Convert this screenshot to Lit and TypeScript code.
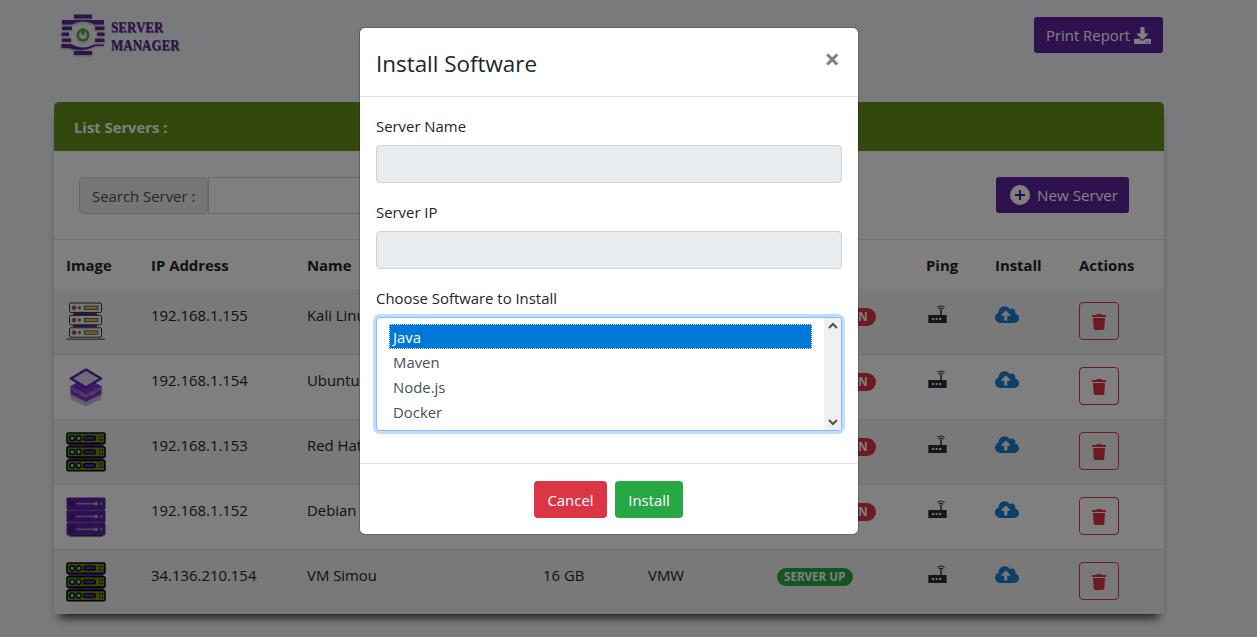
import { LitElement, html, css, svg } from "lit";
import { customElement } from "lit/decorators.js";

const cloud = html`<svg class="cloud" viewBox="0 0 640 512"><path fill="currentColor" d="M537.6 226.6c4.1-10.7 6.4-22.4 6.4-34.6 0-53-43-96-96-96-19.7 0-38.1 6-53.3 16.2C367 64.2 315.3 32 256 32c-88.4 0-160 71.6-160 160 0 2.7.1 5.4.2 8.1C40.2 219.8 0 273.2 0 336c0 79.5 64.5 144 144 144h368c70.7 0 128-57.3 128-128 0-61.9-44-113.6-102.4-125.4zM393.4 288H328v112c0 8.8-7.2 16-16 16h-48c-8.8 0-16-7.2-16-16V288h-65.4c-14.3 0-21.4-17.2-11.3-27.3l105.4-105.4c6.2-6.2 16.4-6.2 22.6 0l105.4 105.4c10.1 10.1 2.9 27.3-11.3 27.3z"/></svg>`;
const trash = html`<svg class="trash" viewBox="0 0 448 512"><path fill="currentColor" d="M432 32H312l-9.4-18.7A24 24 0 0 0 281.1 0H166.8a23.72 23.72 0 0 0-21.4 13.3L136 32H16A16 16 0 0 0 0 48v32a16 16 0 0 0 16 16h416a16 16 0 0 0 16-16V48a16 16 0 0 0-16-16zM53.2 467a48 48 0 0 0 47.9 45h245.8a48 48 0 0 0 47.9-45L416 128H32z"/></svg>`;
const download = html`<svg class="dl" viewBox="0 0 512 512"><path fill="currentColor" d="M216 0h80c13.3 0 24 10.7 24 24v168h87.7c17.8 0 26.7 21.5 14.1 34.1L269.7 378.3c-7.5 7.5-19.8 7.5-27.3 0L90.1 226.1c-12.6-12.6-3.7-34.1 14.1-34.1H192V24c0-13.3 10.7-24 24-24zm296 376v112c0 13.3-10.7 24-24 24H24c-13.3 0-24-10.7-24-24V376c0-13.3 10.7-24 24-24h146.7l49 49c20.1 20.1 52.5 20.1 72.6 0l49-49H488c13.3 0 24 10.7 24 24zm-124 88c0-11-9-20-20-20s-20 9-20 20 9 20 20 20 20-9 20-20zm64 0c0-11-9-20-20-20s-20 9-20 20 9 20 20 20 20-9 20-20z"/></svg>`;
const plus = html`<svg class="plus" viewBox="0 0 20 20"><circle cx="10" cy="10" r="10" fill="currentColor"/><path d="M10 5v10M5 10h10" stroke="#4f1d96" stroke-width="2"/></svg>`;
const router = html`<svg class="router" viewBox="0 0 19 18">
  <path d="M9.4 2.4C11.4.6 14.6.6 16.6 2.4" fill="none" stroke="#22303f" stroke-width="1.2"/>
  <path d="M10.8 4.2C12 3.2 14 3.2 15.2 4.2" fill="none" stroke="#22303f" stroke-width="1.2"/>
  <rect x="12.3" y="5" width="1.5" height="6" fill="#22303f"/>
  <rect x="0" y="10" width="19" height="8" rx="1" fill="#22303f"/>
  <rect x="18" y="10.4" width="1" height="7.2" fill="#2a78bd"/>
  <rect x="0" y="10.4" width="1" height="7.2" fill="#9a6a3a"/>
  <path d="M4 14h2M7.6 14h2M11.2 14h2" stroke="#e9edf2" stroke-width="1.8"/>
</svg>`;

function rackGreen() {
  const u = (y: number) => svg`
    <rect x="1" y="${y}" width="38" height="10.4" rx="1.2" fill="#65901a" stroke="#0c0c0c" stroke-width="1.6"/>
    <circle cx="6.2" cy="${y + 5.2}" r="2.5" fill="#7dc9a0" stroke="#0c0c0c" stroke-width="1.4"/>
    <circle cx="12.8" cy="${y + 5.2}" r="2.5" fill="#7dc9a0" stroke="#0c0c0c" stroke-width="1.4"/>
    <rect x="17.5" y="${y + 3.2}" width="12" height="4" rx="2" fill="#5f22ad" stroke="#0c0c0c" stroke-width="1.2"/>
    <path d="M33 ${y + 3.6}h1.6M36 ${y + 3.6}h1.2M33 ${y + 6.8}h1.6M36 ${y + 6.8}h1.2" stroke="#0c0c0c" stroke-width="1.4"/>`;
  return html`<svg class="ico" viewBox="0 0 40 40">
    <rect x="2.5" y="11" width="35" height="3" fill="#5f22ad"/><rect x="2.5" y="25" width="35" height="3" fill="#5f22ad"/>
    ${u(1)}${u(14.7)}${u(28.4)}</svg>`;
}
function rackPurple() {
  const u = (y: number) => svg`
    <rect x="0.5" y="${y}" width="39" height="12.4" rx="1.4" fill="#5a22a0"/>
    <rect x="3.5" y="${y + 3.7}" width="5" height="5" fill="#46187f"/>
    <rect x="10" y="${y + 5.4}" width="21" height="1.6" fill="#a78cc9"/>
    <circle cx="30" cy="${y + 6.2}" r="2" fill="#4fd0a0"/>
    <rect x="34.2" y="${y + 5.2}" width="2" height="2" fill="#4fd0a0"/>`;
  return html`<svg class="ico" viewBox="0 0 40 40">
    <rect x="3.5" y="37.4" width="33" height="2.2" fill="#16321e"/>
    ${u(0.5)}${u(13.3)}${u(26.1)}</svg>`;
}
function rackGray() {
  const u = (y: number) => svg`
    <rect x="3.5" y="${y}" width="32" height="9.4" rx="1.2" fill="#eef0f2" stroke="#33373c" stroke-width="1"/>
    <circle cx="8" cy="${y + 4.7}" r="1.9" fill="#e2433f" stroke="#33373c" stroke-width=".6"/>
    <circle cx="13.4" cy="${y + 4.7}" r="1.3" fill="#3fa06a" stroke="#33373c" stroke-width=".5"/>
    <rect x="18.4" y="${y + 3}" width="13.5" height="3.4" fill="#f0b92d" stroke="#33373c" stroke-width=".7"/>`;
  return html`<svg class="ico" viewBox="0 0 40 40">
    <rect x="7" y="10" width="24" height="3" fill="#5f22ad"/><rect x="7" y="22.5" width="24" height="3" fill="#5f22ad"/>
    ${u(1)}${u(13.4)}${u(25.8)}
    <path d="M0.5 37.2H39" stroke="#33373c" stroke-width="1"/></svg>`;
}
function stack() {
  return html`<svg class="ico" viewBox="0 0 40 40">
    <path d="M20 24L36 32L20 39.5L4 32Z" fill="#c9c1e0"/>
    <path d="M4.5 19L20 11L35.5 19V28L20 35L4.5 28Z" fill="#7a35c8"/>
    <path d="M4.5 19L20 27L35.5 19V23L20 31L4.5 23Z" fill="#9a62dc"/>
    <path d="M4.5 27L20 35L35.5 27V30L20 38L4.5 30Z" fill="#c3b5dd"/>
    <path d="M20 2.5L35 11.5L20 20.5L5 11.5Z" fill="#dcd6ee" stroke="#5f22ad" stroke-width="2.6" stroke-linejoin="round"/>
    <path d="M14 27l6 3M24 28l5-2" stroke="#f0b92d" stroke-width="1"/>
  </svg>`;
}

const logoIcon = html`<svg class="logo-ico" viewBox="0 0 44 42">
  <g fill="#5a2a95">
    <rect x="13" y="0.5" width="18" height="4"/>
    <path d="M1 6h42v4.5H33C27 6.5 17 6.5 11 10.5H1z"/>
    <rect x="1" y="12.5" width="10" height="3.4"/><rect x="34" y="12.5" width="9.5" height="3.4"/>
    <rect x="0.5" y="18.5" width="7.5" height="3.4"/><rect x="36" y="18.5" width="7.5" height="3.4"/>
    <rect x="1" y="24.5" width="9" height="3.4"/><rect x="34" y="24.5" width="9.5" height="3.4"/>
    <path d="M0.5 30h10C17 34.5 26 34.5 33 30.5h10v1.4H34C27 36.5 16 37 8 34H.5z"/>
    <rect x="13" y="37" width="18" height="4"/>
  </g>
  <circle cx="22" cy="21" r="5.2" fill="none" stroke="#4fae2e" stroke-width="2.2"/>
  <path d="M22 14v6.6" stroke="#4fae2e" stroke-width="2.2"/>
</svg>`;

const rows = [
  { img: rackGray, ip: "192.168.1.155", name: "Kali Linux", ram: "", os: "", up: false },
  { img: stack, ip: "192.168.1.154", name: "Ubuntu", ram: "", os: "", up: false },
  { img: rackGreen, ip: "192.168.1.153", name: "Red Hat", ram: "", os: "", up: false },
  { img: rackPurple, ip: "192.168.1.152", name: "Debian", ram: "", os: "", up: false },
  { img: rackGreen, ip: "34.136.210.154", name: "VM Simou", ram: "16 GB", os: "VMW", up: true },
];

@customElement("app-root")
export class AppRoot extends LitElement {
  static styles = css`
    :host {
      display: block;
      width: 1257px;
      height: 637px;
      overflow: hidden;
      position: relative;
      background: #f3f5f8;
      font-family: "Open Sans", "Noto Sans", sans-serif;
      font-size: 14.9px;
      line-height: 24px;
      color: #212529;
    }
    * { box-sizing: border-box; }
    svg { display: block; }
    .page { width: 1218px; padding: 14px 54px 0; }
    .top { display: flex; justify-content: space-between; align-items: flex-start; height: 88px; padding-left: 7px; }
    .logo { display: flex; gap: 6px; align-items: flex-start; }
    .logo-ico { width: 44px; height: 42px; filter: drop-shadow(0 1px 1px rgba(0,0,0,.3)); }
    .logo-text {
      font-family: "Liberation Serif", serif; font-weight: 700; font-size: 14.6px; line-height: 17.5px;
      color: #5a2a95; padding-top: 5px; letter-spacing: .1px; text-shadow: .5px .5px 1px rgba(60,30,110,.8);
      transform: scaleX(.885); transform-origin: left top;
    }
    .btn-p {
      display: flex; align-items: center; background: #5f229f; color: #fff; border-radius: 3px;
      height: 36px;
    }
    .print { margin: 3px 1px 0 0; width: 129px; padding-left: 12px; gap: 4px; }
    .dl { width: 17px; height: 17px; }
    .card { background: #fff; border-radius: 5px 5px 0 0; box-shadow: 0 9px 9px -5px rgba(0,0,0,.75); }
    .card-head {
      height: 49px; background: #65901a; color: #fff; font-weight: 700; border-radius: 5px 5px 0 0;
      padding: 12.5px 20px 0; font-size: 14.8px;
    }
    .tools { height: 89px; display: flex; justify-content: space-between; padding: 26px 35px 0 25px; border-bottom: 1px solid #dee2e6; }
    .search { display: flex; height: 38px; }
    .search-label {
      width: 129px; height: 37px; background: #e9ecef; border: 1px solid #ced4da; border-radius: 4px;
      padding: 6px 12px 0; color: #495057; white-space: nowrap;
    }
    .search-input { width: 280px; height: 37px; border: 1px solid #ced4da; background: #fff; }
    .new { width: 133px; padding-left: 14px; gap: 7px; font-size: 15.2px; }
    .plus { width: 20px; height: 20px; }
    table { width: 1110px; border-collapse: collapse; table-layout: fixed; }
    th { text-align: left; padding: 13px 12px 0; font-weight: 700; height: 49px; vertical-align: top; }
    td { padding: 13px 12px 0; height: 65px; vertical-align: top; }
    tbody tr { border-top: 1px solid #dee2e6; }
    tbody tr:first-child { border-top: 0; }
    tbody tr:first-child td { padding-top: 14px; }
    tbody tr:first-child .badge { margin-top: 2px; }
    tbody tr:nth-child(odd) { background: #f2f2f2; }
    .ico { width: 40px; height: 40px; margin-top: -1px; }
    .badge {
      display: inline-block; border-radius: 10px; height: 18px; line-height: 18px; padding: 0 8px 0 7px; color: #fff;
      font-weight: 700; font-size: 11.6px; white-space: nowrap; margin-top: 3px;
    }
    .up { background: #28a745; }
    .down { background: #dc3545; width: 99px; }
    .router { width: 19px; height: 18px; margin-left: 2px; margin-top: 2px; }
    .cloud { width: 24px; height: 19.2px; color: #1a7fd0; margin-top: 2px; }
    .del { width: 40px; height: 38px; border: 1px solid #dc3545; border-radius: 4px; display: flex; align-items: center; justify-content: center; color: #dc3545; margin-top: -1px; padding-top: 2px; }
    .trash { width: 14px; height: 16px; }

    .backdrop { position: absolute; inset: 0; background: rgba(0,0,0,.5); }
    .modal {
      position: absolute; left: 359px; top: 27px; width: 500px; height: 508px; background: #fff; background-clip: padding-box;
      border-radius: 6px; border: 1px solid rgba(0,0,0,.2); display: flex; flex-direction: column;
    }
    .m-head { height: 69px; flex: none; border-bottom: 1px solid #dee2e6; display: flex; justify-content: space-between; padding: 0 16px; align-items: center; }
    .m-title { font-size: 22.4px; margin-top: 4px; }
    .close { font-size: 27px; font-weight: 700; color: #7f7f7f; margin: -6px 2px 0 0; line-height: 24px; }
    .m-body { flex: 1; padding: 17px 16px 0; display: flex; flex-direction: column; }
    label { display: block; height: 24px; margin-bottom: 7px; line-height: 24px; }
    .ctl { height: 38px; background: #e9ecef; border: 1px solid #ced4da; border-radius: 4px; margin-bottom: 17px; }
    .list {
      height: 114px; border: 1px solid #80bdff; border-radius: 4px; box-shadow: 0 0 0 3px rgba(0,123,255,.25);
      display: flex; color: #495057; background: #fff; overflow: hidden;
    }
    .opts { flex: 1; padding: 6px 12px 0 12px; }
    .opt { height: 25px; line-height: 25px; padding: 1px 0 0 4px; }
    .opt.sel { background: #0078d7; color: #fff; outline: 1px dotted #fff; outline-offset: -1px; }
    .scroll { width: 17px; background: #f0f0f0; display: flex; flex-direction: column; justify-content: space-between; align-items: center; padding: 4px 0 4px; }
    .chev { width: 10px; height: 8px; }
    .m-foot { height: 71px; flex: none; border-top: 1px solid #dee2e6; display: flex; justify-content: center; gap: 8px; padding-top: 17px; padding-right: 1px; }
    .mb { height: 37px; border-radius: 4px; color: #fff; display: flex; align-items: center; justify-content: center; padding-top: 1px; }
    .cancel { width: 73px; background: #dc3545; }
    .install { width: 68px; background: #28a745; }
  `;

  render() {
    return html`
      <div class="page">
        <div class="top">
          <div class="logo">${logoIcon}<div class="logo-text">SERVER<br />MANAGER</div></div>
          <div class="btn-p print">Print Report ${download}</div>
        </div>
        <div class="card">
          <div class="card-head">List Servers :</div>
          <div class="tools">
            <div class="search"><div class="search-label">Search Server :</div><div class="search-input"></div></div>
            <div class="btn-p new">${plus} New Server</div>
          </div>
          <table>
            <colgroup>
              <col style="width:85px" /><col style="width:156px" /><col style="width:236px" /><col style="width:105px" />
              <col style="width:129px" /><col style="width:149px" /><col style="width:69px" /><col style="width:84px" /><col style="width:97px" />
            </colgroup>
            <thead><tr><th>Image</th><th>IP Address</th><th>Name</th><th></th><th></th><th></th><th>Ping</th><th>Install</th><th>Actions</th></tr></thead>
            <tbody>
              ${rows.map(
                (r) => html`<tr>
                  <td>${r.img()}</td><td>${r.ip}</td><td>${r.name}</td><td>${r.ram}</td><td>${r.os}</td>
                  <td><span class="badge ${r.up ? "up" : "down"}">${r.up ? "SERVER UP" : "SERVER DOWN"}</span></td>
                  <td>${router}</td><td>${cloud}</td><td><div class="del">${trash}</div></td>
                </tr>`
              )}
            </tbody>
          </table>
        </div>
      </div>
      <div class="backdrop"></div>
      <div class="modal">
        <div class="m-head"><div class="m-title">Install Software</div><div class="close">×</div></div>
        <div class="m-body">
          <label>Server Name</label><div class="ctl"></div>
          <label>Server IP</label><div class="ctl"></div>
          <label>Choose Software to Install</label>
          <div class="list">
            <div class="opts">
              <div class="opt sel">Java</div><div class="opt">Maven</div><div class="opt">Node.js</div><div class="opt">Docker</div>
            </div>
            <div class="scroll">
              <svg class="chev" viewBox="0 0 10 8"><path d="M1 6l4-4 4 4" fill="none" stroke="#505050" stroke-width="2"/></svg>
              <svg class="chev" viewBox="0 0 10 8"><path d="M1 2l4 4 4-4" fill="none" stroke="#505050" stroke-width="2"/></svg>
            </div>
          </div>
        </div>
        <div class="m-foot"><div class="mb cancel">Cancel</div><div class="mb install">Install</div></div>
      </div>
    `;
  }
}
